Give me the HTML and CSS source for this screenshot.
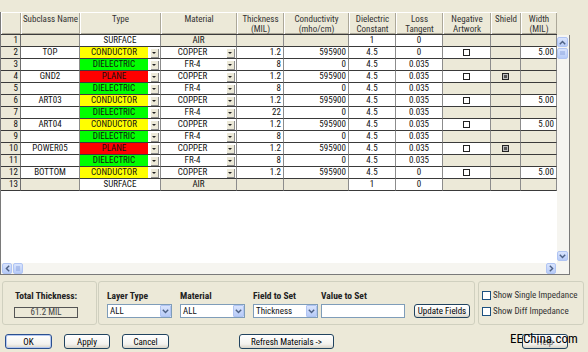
FILE: index.html
```html
<!DOCTYPE html>
<html lang="en">
<head>
  <meta charset="UTF-8" />
  <meta name="viewport" content="width=device-width, initial-scale=1.0"/>
  <title>Layout Cross Section</title>
  <link rel="stylesheet" href="styles.css">
</head>
<body>
<div class="window">

  <div class="grid">
    <div class="grid-main">
      <div class="cells">
        <table class="stack">
          <colgroup>
            <col class="w-num"><col class="w-name"><col class="w-type"><col class="w-mat">
            <col class="w-thk"><col class="w-cond"><col class="w-diel"><col class="w-loss">
            <col class="w-neg"><col class="w-shield"><col class="w-width">
          </colgroup>
          <thead>
            <tr>
              <th></th>
              <th>Subclass Name</th>
              <th>Type</th>
              <th>Material</th>
              <th>Thickness<br>(MIL)</th>
              <th>Conductivity<br>(mho/cm)</th>
              <th>Dielectric<br>Constant</th>
              <th>Loss<br>Tangent</th>
              <th>Negative<br>Artwork</th>
              <th>Shield</th>
              <th>Width<br>(MIL)</th>
            </tr>
          </thead>
          <tbody>
            <tr>
              <td class="num">1</td><td class="off"></td><td class="c">SURFACE</td><td class="off c">AIR</td>
              <td class="off"></td><td class="off"></td><td class="c">1</td><td class="c">0</td>
              <td class="off"></td><td class="off"></td><td class="off"></td>
            </tr>
            <tr>
              <td class="num">2</td><td class="c">TOP</td>
              <td class="p"><div class="pick"><span class="val conductor">CONDUCTOR</span><span class="dd"></span></div></td>
              <td class="p"><div class="pick"><span class="val">COPPER</span><span class="dd"></span></div></td>
              <td class="r">1.2</td><td class="r">595900</td><td class="c">4.5</td><td class="c">0</td>
              <td class="c"><span class="tick"></span></td><td class="off"></td><td class="r">5.00</td>
            </tr>
            <tr>
              <td class="num">3</td><td></td>
              <td class="p"><div class="pick"><span class="val dielectric">DIELECTRIC</span><span class="dd"></span></div></td>
              <td class="p"><div class="pick"><span class="val">FR-4</span><span class="dd"></span></div></td>
              <td class="r">8</td><td class="r">0</td><td class="c">4.5</td><td class="c">0.035</td>
              <td class="off"></td><td class="off"></td><td class="off"></td>
            </tr>
            <tr>
              <td class="num">4</td><td class="c">GND2</td>
              <td class="p"><div class="pick"><span class="val plane">PLANE</span><span class="dd"></span></div></td>
              <td class="p"><div class="pick"><span class="val">COPPER</span><span class="dd"></span></div></td>
              <td class="r">1.2</td><td class="r">595900</td><td class="c">4.5</td><td class="c">0.035</td>
              <td class="c"><span class="tick"></span></td><td class="off c"><span class="tick on"></span></td><td class="off"></td>
            </tr>
            <tr>
              <td class="num">5</td><td></td>
              <td class="p"><div class="pick"><span class="val dielectric">DIELECTRIC</span><span class="dd"></span></div></td>
              <td class="p"><div class="pick"><span class="val">FR-4</span><span class="dd"></span></div></td>
              <td class="r">8</td><td class="r">0</td><td class="c">4.5</td><td class="c">0.035</td>
              <td class="off"></td><td class="off"></td><td class="off"></td>
            </tr>
            <tr>
              <td class="num">6</td><td class="c">ART03</td>
              <td class="p"><div class="pick"><span class="val conductor">CONDUCTOR</span><span class="dd"></span></div></td>
              <td class="p"><div class="pick"><span class="val">COPPER</span><span class="dd"></span></div></td>
              <td class="r">1.2</td><td class="r">595900</td><td class="c">4.5</td><td class="c">0.035</td>
              <td class="c"><span class="tick"></span></td><td class="off"></td><td class="r">5.00</td>
            </tr>
            <tr>
              <td class="num">7</td><td></td>
              <td class="p"><div class="pick"><span class="val dielectric">DIELECTRIC</span><span class="dd"></span></div></td>
              <td class="p"><div class="pick"><span class="val">FR-4</span><span class="dd"></span></div></td>
              <td class="r">22</td><td class="r">0</td><td class="c">4.5</td><td class="c">0.035</td>
              <td class="off"></td><td class="off"></td><td class="off"></td>
            </tr>
            <tr>
              <td class="num">8</td><td class="c">ART04</td>
              <td class="p"><div class="pick"><span class="val conductor">CONDUCTOR</span><span class="dd"></span></div></td>
              <td class="p"><div class="pick"><span class="val">COPPER</span><span class="dd"></span></div></td>
              <td class="r">1.2</td><td class="r">595900</td><td class="c">4.5</td><td class="c">0.035</td>
              <td class="c"><span class="tick"></span></td><td class="off"></td><td class="r">5.00</td>
            </tr>
            <tr>
              <td class="num">9</td><td></td>
              <td class="p"><div class="pick"><span class="val dielectric">DIELECTRIC</span><span class="dd"></span></div></td>
              <td class="p"><div class="pick"><span class="val">FR-4</span><span class="dd"></span></div></td>
              <td class="r">8</td><td class="r">0</td><td class="c">4.5</td><td class="c">0.035</td>
              <td class="off"></td><td class="off"></td><td class="off"></td>
            </tr>
            <tr>
              <td class="num">10</td><td class="c">POWER05</td>
              <td class="p"><div class="pick"><span class="val plane">PLANE</span><span class="dd"></span></div></td>
              <td class="p"><div class="pick"><span class="val">COPPER</span><span class="dd"></span></div></td>
              <td class="r">1.2</td><td class="r">595900</td><td class="c">4.5</td><td class="c">0.035</td>
              <td class="c"><span class="tick"></span></td><td class="off c"><span class="tick on"></span></td><td class="off"></td>
            </tr>
            <tr>
              <td class="num">11</td><td></td>
              <td class="p"><div class="pick"><span class="val dielectric">DIELECTRIC</span><span class="dd"></span></div></td>
              <td class="p"><div class="pick"><span class="val">FR-4</span><span class="dd"></span></div></td>
              <td class="r">8</td><td class="r">0</td><td class="c">4.5</td><td class="c">0.035</td>
              <td class="off"></td><td class="off"></td><td class="off"></td>
            </tr>
            <tr>
              <td class="num">12</td><td class="c">BOTTOM</td>
              <td class="p"><div class="pick"><span class="val conductor">CONDUCTOR</span><span class="dd"></span></div></td>
              <td class="p"><div class="pick"><span class="val">COPPER</span><span class="dd"></span></div></td>
              <td class="r">1.2</td><td class="r">595900</td><td class="c">4.5</td><td class="c">0</td>
              <td class="c"><span class="tick"></span></td><td class="off"></td><td class="r">5.00</td>
            </tr>
            <tr>
              <td class="num">13</td><td class="off"></td><td class="c">SURFACE</td><td class="off c">AIR</td>
              <td class="off"></td><td class="off"></td><td class="c">1</td><td class="c">0</td>
              <td class="off"></td><td class="off"></td><td class="off"></td>
            </tr>
          </tbody>
        </table>
      </div>

      <div class="vscroll">
        <span class="arrow">
          <svg width="7" height="5" viewBox="0 0 7 5"><path d="M0.8 4.2 L3.5 1.4 L6.2 4.2" fill="none" stroke="#4D6185" stroke-width="1.4"/></svg>
        </span>
        <span class="thumb thumb-v">
          <svg width="5" height="5" viewBox="0 0 5 5"><path d="M0 1h5M0 3h5" stroke="#8DA5DE" stroke-width="1"/></svg>
        </span>
        <span class="arrow arrow-end">
          <svg width="7" height="5" viewBox="0 0 7 5"><path d="M0.8 0.8 L3.5 3.6 L6.2 0.8" fill="none" stroke="#4D6185" stroke-width="1.4"/></svg>
        </span>
      </div>
    </div>

    <div class="grid-foot">
      <div class="hscroll">
        <span class="arrow">
          <svg width="5" height="7" viewBox="0 0 5 7"><path d="M4.2 0.8 L1.4 3.5 L4.2 6.2" fill="none" stroke="#4D6185" stroke-width="1.4"/></svg>
        </span>
        <span class="thumb thumb-h">
          <svg width="5" height="5" viewBox="0 0 5 5"><path d="M1 0v5M3 0v5" stroke="#8DA5DE" stroke-width="1"/></svg>
        </span>
        <span class="arrow arrow-end">
          <svg width="5" height="7" viewBox="0 0 5 7"><path d="M0.8 0.8 L3.6 3.5 L0.8 6.2" fill="none" stroke="#4D6185" stroke-width="1.4"/></svg>
        </span>
      </div>
      <div class="corner"></div>
    </div>
  </div>

  <div class="panel">
    <div class="group g-total">
      <div class="label">Total Thickness:</div>
      <div class="readout">61.2 MIL</div>
    </div>

    <div class="group g-fields">
      <div class="field">
        <div class="label">Layer Type</div>
        <div class="select w65"><span>ALL</span><span class="drop"><svg width="7" height="5" viewBox="0 0 7 5"><path d="M0.8 0.8 L3.5 3.6 L6.2 0.8" fill="none" stroke="#4D6185" stroke-width="1.4"/></svg></span></div>
      </div>
      <div class="field">
        <div class="label">Material</div>
        <div class="select w65"><span>ALL</span><span class="drop"><svg width="7" height="5" viewBox="0 0 7 5"><path d="M0.8 0.8 L3.5 3.6 L6.2 0.8" fill="none" stroke="#4D6185" stroke-width="1.4"/></svg></span></div>
      </div>
      <div class="field field-set">
        <div class="label">Field to Set</div>
        <div class="select w65"><span>Thickness</span><span class="drop"><svg width="7" height="5" viewBox="0 0 7 5"><path d="M0.8 0.8 L3.5 3.6 L6.2 0.8" fill="none" stroke="#4D6185" stroke-width="1.4"/></svg></span></div>
      </div>
      <div class="field field-value">
        <div class="label">Value to Set</div>
        <div class="textbox"></div>
      </div>
      <button class="btn btn-update">Update Fields</button>
    </div>

    <div class="group g-checks">
      <label class="check"><span class="checkbox"></span>Show Single Impedance</label>
      <label class="check"><span class="checkbox"></span>Show Diff Impedance</label>
    </div>
  </div>

  <div class="buttons">
    <button class="btn btn-ok">OK</button>
    <button class="btn btn-apply">Apply</button>
    <button class="btn btn-cancel">Cancel</button>
    <button class="btn btn-refresh">Refresh Materials -&gt;</button>
    <button class="btn btn-help">Help</button>
  </div>

  <div class="watermark">EEChina.com</div>
</div>
</body>
</html>
```

FILE: styles.css
```css
:root {
  --face: #ECE9D8;
  --row-line: #3a3a3a;
  --col-line: #8c8c8c;
  --frame: #7a7a7a;
  --track: #F6F5F0;
  --xp-blue-top: #D9E4FD;
  --xp-blue-bottom: #B7CBF7;
  --xp-blue-edge: #B0C4F3;
  --field-edge: #7F9DB9;
  --group-edge: #D0D0BF;
  --conductor: #FFFF00;
  --dielectric: #00FF00;
  --plane: #FF0000;
  --text: #111111;
}

* {
  box-sizing: border-box;
}

body {
  margin: 0;
  background-color: var(--face);
  color: var(--text);
  font-family: "Roboto Condensed", "Liberation Sans", sans-serif;
  font-size: 9px;
}

.window {
  position: relative;
  width: 588px;
  height: 352px;
  padding-top: 12px;
  overflow: hidden;
}

/* ---- stack-up grid ---- */

.grid {
  width: 570px;
}

.grid-main {
  display: flex;
}

.cells {
  width: 557px;
  height: 251px;
  background: #fff;
  border-left: 1px solid var(--frame);
}

.stack {
  width: 556px;
  table-layout: fixed;
  border-collapse: separate;
  border-spacing: 0;
}

.w-num { width: 20px; }
.w-name { width: 59px; }
.w-type { width: 81px; }
.w-mat { width: 76px; }
.w-thk { width: 47px; }
.w-cond { width: 65px; }
.w-diel { width: 47px; }
.w-loss { width: 47px; }
.w-neg { width: 48px; }
.w-shield { width: 30px; }
.w-width { width: 36px; }

.stack thead tr {
  height: 23px;
}

.stack th {
  padding: 2px 0 0;
  vertical-align: top;
  font-weight: normal;
  line-height: 10px;
  white-space: nowrap;
  color: #333;
  background: var(--face);
  border-bottom: 1px solid var(--row-line);
  box-shadow: inset 1px 1px #fff, inset -1px -1px #ACA899;
}

.stack tbody tr {
  height: 12px;
}

.stack td {
  padding: 0 2px;
  line-height: 11px;
  white-space: nowrap;
  overflow: hidden;
  border-bottom: 1px solid var(--row-line);
  border-right: 1px solid var(--col-line);
}

.stack td.num {
  text-align: right;
  padding-right: 2px;
  background: var(--face);
  border-right-color: #6e6e6e;
}

.stack td.off {
  background: var(--face);
}

.stack td.c {
  text-align: center;
}

.stack td.r {
  text-align: right;
}

.stack td.p {
  padding: 0;
}

.pick {
  display: flex;
  align-items: center;
  height: 11px;
}

.pick .val {
  flex: 1;
  height: 11px;
  text-align: center;
}

.val.conductor { background: var(--conductor); }
.val.dielectric { background: var(--dielectric); }
.val.plane { background: var(--plane); }

.dd {
  position: relative;
  width: 9px;
  height: 10px;
  margin: 0 1px 0 2px;
  background: var(--face);
  box-shadow: inset 1px 1px #fff, inset -1px -1px #8c8c8c;
}

.dd::after {
  content: "";
  position: absolute;
  left: 2px;
  top: 4px;
  border-left: 2.5px solid transparent;
  border-right: 2.5px solid transparent;
  border-top: 2.5px solid #222;
}

.tick {
  display: inline-block;
  width: 7px;
  height: 7px;
  vertical-align: -1px;
  border: 1px solid #222;
  background: #fff;
}

.tick.on {
  background: #555;
  box-shadow: inset 0 0 0 1px #bbb;
}

/* ---- scroll bars ---- */

.vscroll {
  display: flex;
  flex-direction: column;
  width: 13px;
  height: 228px;
  margin-top: 23px;
  padding: 2px 1px 2px 0;
  background: var(--track);
  border-right: 1px solid var(--frame);
}

.arrow,
.thumb {
  display: flex;
  align-items: center;
  justify-content: center;
  background: linear-gradient(var(--xp-blue-top), var(--xp-blue-bottom));
  border: 1px solid var(--xp-blue-edge);
  border-radius: 2px;
}

.vscroll .arrow {
  width: 11px;
  height: 10px;
}

.thumb-v {
  width: 11px;
  height: 11px;
  margin-top: 1px;
}

.arrow-end {
  margin-top: auto;
}

.grid-foot {
  display: flex;
  height: 12px;
  border-bottom: 1px solid var(--frame);
}

.hscroll {
  display: flex;
  width: 557px;
  height: 11px;
  padding: 0 1px 0 1px;
  background: var(--track);
  border-left: 1px solid var(--frame);
}

.hscroll .arrow {
  width: 10px;
  height: 11px;
}

.hscroll .arrow-end {
  margin-top: 0;
  margin-left: auto;
}

.thumb-h {
  width: 10px;
  height: 11px;
  margin-left: 1px;
}

.corner {
  width: 13px;
  background: var(--track);
  border-right: 1px solid var(--frame);
}

/* ---- lower panel ---- */

.panel {
  display: flex;
  height: 44px;
  margin-top: 6px;
  padding-left: 2px;
}

.group {
  height: 44px;
  border: 1px solid var(--group-edge);
  border-radius: 3px;
}

.label {
  font-size: 9.5px;
  font-weight: bold;
  line-height: 12px;
  white-space: nowrap;
  color: #222;
}

.g-total {
  width: 95px;
  padding: 8px 0 0 11px;
}

.g-total .label {
  padding-left: 1px;
}

.readout {
  width: 64px;
  height: 11px;
  margin-top: 5px;
  border: 1px solid #555;
  text-align: center;
  line-height: 9px;
  color: #444;
}

.g-fields {
  display: flex;
  align-items: flex-start;
  width: 377px;
  margin-left: 1px;
  padding: 8px 0 0 8px;
}

.field {
  margin-right: 8px;
}

.field-set {
  margin-right: 3px;
}

.field-value {
  margin-right: 9px;
}

.field .label {
  margin-bottom: 2px;
}

.select,
.textbox {
  display: flex;
  align-items: center;
  height: 14px;
  background: #fff;
  border: 1px solid var(--field-edge);
}

.w65 {
  width: 65px;
}

.select span:first-child {
  flex: 1;
  padding-left: 2px;
}

.select .drop {
  display: flex;
  align-items: center;
  justify-content: center;
  width: 11px;
  height: 12px;
  background: linear-gradient(var(--xp-blue-top), var(--xp-blue-bottom));
  border: 1px solid var(--xp-blue-edge);
  border-radius: 1px;
}

.textbox {
  width: 84px;
}

.btn {
  height: 15px;
  padding: 0;
  font-family: inherit;
  font-size: 9px;
  white-space: nowrap;
  color: #000;
  background: linear-gradient(#fff, #F3F2EE 70%, #D8D4C8);
  border: 1px solid #21435F;
  border-radius: 3px;
}

.btn-update {
  width: 56px;
  height: 14px;
  margin-top: 14px;
}

.g-checks {
  width: 106px;
  margin-left: 3px;
  padding: 8px 0 0 3px;
}

.check {
  display: flex;
  align-items: center;
  height: 10px;
  margin-bottom: 6px;
  white-space: nowrap;
  color: #333;
}

.checkbox {
  flex: none;
  width: 9px;
  height: 9px;
  margin-right: 2px;
  background: #fff;
  border: 1px solid #1C5180;
}

/* ---- dialog buttons ---- */

.buttons {
  display: flex;
  margin-top: 9px;
  padding-left: 5px;
}

.btn-ok { width: 47px; border-color: #2A4F8F; box-shadow: inset 0 0 0 1px #B4C8F0; }
.btn-apply { width: 46px; margin-left: 12px; }
.btn-cancel { width: 47px; margin-left: 12px; }
.btn-refresh { width: 95px; margin-left: 70px; }
.btn-help { width: 46px; margin-left: auto; margin-right: 20px; color: #666; }

.watermark {
  position: absolute;
  left: 510px;
  top: 331px;
  font-size: 13px;
  line-height: 16px;
  color: #000;
}
```
